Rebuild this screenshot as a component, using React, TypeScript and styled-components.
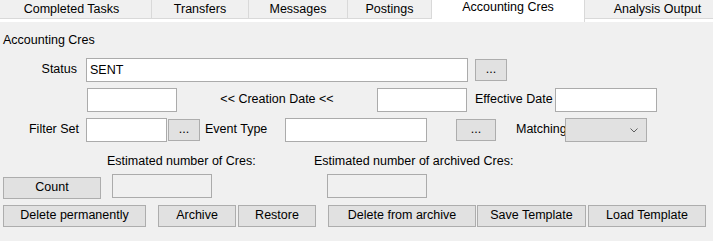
import React from "react";
import styled, { createGlobalStyle } from "styled-components";

const GlobalStyle = createGlobalStyle`
  html, body {
    margin: 0;
    padding: 0;
    background: #f0f0f0;
  }
  body {
    font-family: "Liberation Sans", Arial, sans-serif;
    font-size: 12.5px;
    color: #000;
  }
`;

const Window = styled.div`
  width: 713px;
  height: 241px;
  overflow: hidden;
  background: #f0f0f0;
`;

const TabStrip = styled.div`
  display: flex;
  height: 18px;
  margin-left: -8px;
  border-bottom: 1px solid #d9d9d9;
  white-space: nowrap;
`;

const Tab = styled.div<{ $w: number; $active?: boolean }>`
  flex: 0 0 auto;
  box-sizing: border-box;
  width: ${(p) => p.$w}px;
  height: ${(p) => (p.$active ? 22 : 18)}px;
  margin-bottom: ${(p) => (p.$active ? -4 : 0)}px;
  position: relative;
  z-index: ${(p) => (p.$active ? 1 : 0)};
  border-right: 1px solid #d9d9d9;
  background: ${(p) => (p.$active ? "#ffffff" : "#f0f0f0")};
  text-align: center;
  line-height: 15px;
  padding-top: ${(p) => (p.$active ? 0 : 2)}px;
  color: #000;
`;

const PageTop = styled.div`
  height: 3px;
  background: #ffffff;
`;

const Content = styled.div`
  display: flex;
  flex-direction: column;
`;

const Heading = styled.div`
  margin-top: 11px;
  padding-left: 3px;
  line-height: 15px;
  height: 15px;
`;

const Row = styled.div<{ $top: number; $h?: number }>`
  display: flex;
  align-items: center;
  margin-top: ${(p) => p.$top}px;
  height: ${(p) => p.$h ?? 24}px;
  white-space: nowrap;
`;

const Label = styled.span<{
  $w: number;
  $ml?: number;
  $align?: "left" | "right" | "center";
  $pl?: number;
}>`
  flex: 0 0 auto;
  box-sizing: border-box;
  width: ${(p) => p.$w}px;
  margin-left: ${(p) => p.$ml ?? 0}px;
  padding-left: ${(p) => p.$pl ?? 0}px;
  text-align: ${(p) => p.$align ?? "left"};
  line-height: 15px;
  margin-top: -2px;
`;

const TextBox = styled.input<{ $w: number; $ml?: number; $disabled?: boolean }>`
  flex: 0 0 auto;
  box-sizing: border-box;
  width: ${(p) => p.$w}px;
  height: 24px;
  margin: 0 0 0 ${(p) => p.$ml ?? 0}px;
  padding: 0 0 1px 3px;
  border: 1px solid #ababab;
  border-radius: 0;
  background: ${(p) => (p.$disabled ? "#f0f0f0" : "#ffffff")};
  font-family: inherit;
  font-size: 12.5px;
  color: #000;
  outline: none;
`;

const Button = styled.button<{ $w: number; $ml?: number; $mt?: number }>`
  flex: 0 0 auto;
  box-sizing: border-box;
  width: ${(p) => p.$w}px;
  height: 22px;
  margin: ${(p) => p.$mt ?? 0}px 0 0 ${(p) => p.$ml ?? 0}px;
  align-self: ${(p) => (p.$mt ? "flex-start" : "center")};
  padding: 0 0 1px 0;
  border: 1px solid #adadad;
  border-radius: 0;
  background: #e1e1e1;
  font-family: inherit;
  font-size: 12.5px;
  color: #000;
  line-height: 15px;
  cursor: default;
`;

const Select = styled.div<{ $w: number }>`
  flex: 0 0 auto;
  box-sizing: border-box;
  width: ${(p) => p.$w}px;
  height: 24px;
  border: 1px solid #adadad;
  background: #e1e1e1;
  display: flex;
  align-items: center;
  justify-content: flex-end;
  padding-right: 8px;
`;

const Chevron = () => (
  <svg width="8" height="5" viewBox="0 0 8 5">
    <polyline
      points="0.5,0.5 4,4 7.5,0.5"
      fill="none"
      stroke="#5f5f5f"
      strokeWidth="1"
    />
  </svg>
);

const tabs: { label: string; w: number; active?: boolean }[] = [
  { label: "Completed Tasks", w: 160 },
  { label: "Transfers", w: 97 },
  { label: "Messages", w: 99 },
  { label: "Postings", w: 84 },
  { label: "Accounting Cres", w: 153, active: true },
  { label: "Analysis Output", w: 146 },
];

export default function App() {
  return (
    <>
      <GlobalStyle />
      <Window>
        <TabStrip>
          {tabs.map((t) => (
            <Tab key={t.label} $w={t.w} $active={t.active}>
              {t.label}
            </Tab>
          ))}
        </TabStrip>
        <PageTop />
        <Content>
          <Heading>Accounting Cres</Heading>

          <Row $top={10}>
            <Label $w={77} $align="right">
              Status
            </Label>
            <TextBox $w={382} $ml={9} defaultValue="SENT" />
            <Button $w={32} $ml={7}>
              ...
            </Button>
          </Row>

          <Row $top={6}>
            <TextBox $w={90} $ml={87} />
            <Label $w={200} $align="center">
              {"<< Creation Date <<"}
            </Label>
            <TextBox $w={90} />
            <Label $w={80} $ml={8}>
              Effective Date
            </Label>
            <TextBox $w={102} />
          </Row>

          <Row $top={6}>
            <Label $w={79} $align="right">
              Filter Set
            </Label>
            <TextBox $w={81} $ml={7} />
            <Button $w={32} $ml={1}>
              ...
            </Button>
            <Label $w={85} $pl={5}>
              Event Type
            </Label>
            <TextBox $w={142} />
            <Button $w={40} $ml={29}>
              ...
            </Button>
            <Label $w={69} $pl={20}>
              Matching
            </Label>
            <Select $w={82}>
              <Chevron />
            </Select>
          </Row>

          <Row $top={13} $h={15}>
            <Label $w={207} $ml={107}>
              Estimated number of Cres:
            </Label>
            <Label $w={260}>Estimated number of archived Cres:</Label>
          </Row>

          <Row $top={4}>
            <Button $w={98} $ml={3} $mt={3}>
              Count
            </Button>
            <TextBox $w={100} $ml={11} $disabled readOnly />
            <TextBox $w={100} $ml={115} $disabled readOnly />
          </Row>

          <Row $top={7} $h={22}>
            <Button $w={143} $ml={3}>
              Delete permanently
            </Button>
            <Button $w={78} $ml={12}>
              Archive
            </Button>
            <Button $w={78} $ml={2}>
              Restore
            </Button>
            <Button $w={148} $ml={12}>
              Delete from archive
            </Button>
            <Button $w={109} $ml={1}>
              Save Template
            </Button>
            <Button $w={118} $ml={2}>
              Load Template
            </Button>
          </Row>
        </Content>
      </Window>
    </>
  );
}
